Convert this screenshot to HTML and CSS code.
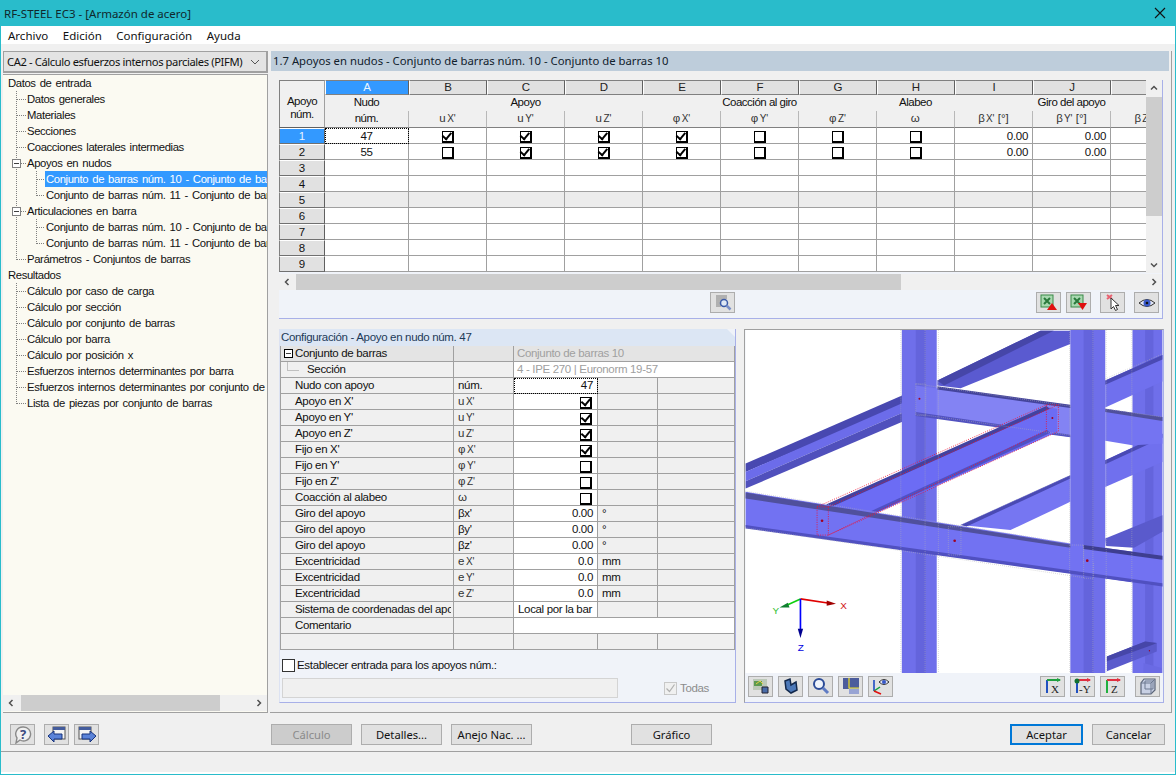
FILE: index.html
```html
<!DOCTYPE html>
<html lang="es">
<head>
<meta charset="utf-8">
<title>RF-STEEL EC3</title>
<link rel="stylesheet" href="styles.css">
</head>
<body>
<div class="app">
  <header class="titlebar">
    <span>RF-STEEL EC3 - [Armazón de acero]</span>
    <svg class="close" width="12" height="12" viewBox="0 0 12 12"><path d="M1 1l10 10M11 1L1 11" stroke="#111" stroke-width="1.1" fill="none"/></svg>
  </header>
  <nav class="menubar"><span>Archivo</span><span>Edición</span><span>Configuración</span><span>Ayuda</span></nav>

  <div class="content">
    <aside class="side">
      <div class="combo"><span>CA2 - Cálculo esfuerzos internos parciales (PIFM)</span>
        <svg width="10" height="6" viewBox="0 0 10 6"><path d="M1 1l4 4 4-4" stroke="#555" fill="none"/></svg>
      </div>
      <div class="tree">
        <div class="tree-rows">
          <div class="node l0">Datos de entrada</div>
          <div class="node l1"><i class="gut g1"></i>Datos generales</div>
          <div class="node l1"><i class="gut g1"></i>Materiales</div>
          <div class="node l1"><i class="gut g1"></i>Secciones</div>
          <div class="node l1"><i class="gut g1"></i>Coacciones laterales intermedias</div>
          <div class="node l1"><i class="gut g1"><b class="minus"></b></i>Apoyos en nudos</div>
          <div class="node l2"><i class="gut g2"></i><span class="label sel">Conjunto de barras núm. 10 - Conjunto de barras 10</span></div>
          <div class="node l2"><i class="gut g2 end"></i><span class="label">Conjunto de barras núm. 11 - Conjunto de barras 11</span></div>
          <div class="node l1"><i class="gut g1"><b class="minus"></b></i>Articulaciones en barra</div>
          <div class="node l2"><i class="gut g2"></i><span class="label">Conjunto de barras núm. 10 - Conjunto de barras 10</span></div>
          <div class="node l2"><i class="gut g2 end"></i><span class="label">Conjunto de barras núm. 11 - Conjunto de barras 11</span></div>
          <div class="node l1"><i class="gut g1 end"></i>Parámetros - Conjuntos de barras</div>
          <div class="node l0">Resultados</div>
          <div class="node l1"><i class="gut g1"></i>Cálculo por caso de carga</div>
          <div class="node l1"><i class="gut g1"></i>Cálculo por sección</div>
          <div class="node l1"><i class="gut g1"></i>Cálculo por conjunto de barras</div>
          <div class="node l1"><i class="gut g1"></i>Cálculo por barra</div>
          <div class="node l1"><i class="gut g1"></i>Cálculo por posición x</div>
          <div class="node l1"><i class="gut g1"></i>Esfuerzos internos determinantes por barra</div>
          <div class="node l1"><i class="gut g1"></i>Esfuerzos internos determinantes por conjunto de barras</div>
          <div class="node l1"><i class="gut g1 end"></i>Lista de piezas por conjunto de barras</div>
        </div>
        <div class="hscroll side-scroll">
          <svg class="arr" width="8" height="8" viewBox="0 0 8 8"><path d="M5.500 1L2.500 4l3 3" stroke="#505050" stroke-width="1.500" fill="none"/></svg>
          <div class="thumb side-thumb"></div><div class="track"></div>
          <svg class="arr" width="8" height="8" viewBox="0 0 8 8"><path d="M2.500 1l3 3-3 3" stroke="#505050" stroke-width="1.500" fill="none"/></svg>
        </div>
      </div>
    </aside>

    <main class="main">
      <h1 class="section-title">1.7 Apoyos en nudos - Conjunto de barras núm. 10 - Conjunto de barras 10</h1>

      <section class="grid-panel">
        <div class="grid-top">
          <div class="grid-clip">
            <table class="grid">
              <colgroup><col class="c-rh"><col class="c-a"><col class="c"><col class="c"><col class="c"><col class="c"><col class="c"><col class="c"><col class="c"><col class="c"><col class="c"><col class="c"></colgroup>
              <thead>
                <tr class="letters">
                  <th class="corner" rowspan="3"><span class="two">Apoyo<br>núm.</span></th>
                  <th class="letter active">A</th><th class="letter">B</th><th class="letter">C</th><th class="letter">D</th><th class="letter">E</th><th class="letter">F</th><th class="letter">G</th><th class="letter">H</th><th class="letter">I</th><th class="letter">J</th><th class="letter">K</th>
                </tr>
                <tr class="hd">
                  <th>Nudo</th><th colspan="3">Apoyo</th><th colspan="3">Coacción al giro</th><th>Alabeo</th><th colspan="3">Giro del apoyo</th>
                </tr>
                <tr class="hd sub">
                  <th>núm.</th>
                  <th class="sym">u<small>X'</small></th><th class="sym">u<small>Y'</small></th><th class="sym">u<small>Z'</small></th>
                  <th class="sym">φ<small>X'</small></th><th class="sym">φ<small>Y'</small></th><th class="sym">φ<small>Z'</small></th>
                  <th class="sym">ω</th>
                  <th class="sym deg">β<small>X'</small> [°]</th><th class="sym deg">β<small>Y'</small> [°]</th><th class="sym deg">β<small>Z'</small> [°]</th>
                </tr>
              </thead>
              <tbody>
                <tr>
                  <th class="rh active">1</th><td class="ctr focus">47</td>
                  <td class="ctr"><span class="cb on"></span></td><td class="ctr"><span class="cb on"></span></td><td class="ctr"><span class="cb on"></span></td>
                  <td class="ctr"><span class="cb on"></span></td><td class="ctr"><span class="cb"></span></td><td class="ctr"><span class="cb"></span></td>
                  <td class="ctr"><span class="cb"></span></td><td class="num">0.00</td><td class="num">0.00</td><td></td>
                </tr>
                <tr>
                  <th class="rh">2</th><td class="ctr">55</td>
                  <td class="ctr"><span class="cb"></span></td><td class="ctr"><span class="cb on"></span></td><td class="ctr"><span class="cb on"></span></td>
                  <td class="ctr"><span class="cb on"></span></td><td class="ctr"><span class="cb"></span></td><td class="ctr"><span class="cb"></span></td>
                  <td class="ctr"><span class="cb"></span></td><td class="num">0.00</td><td class="num">0.00</td><td></td>
                </tr>
                <tr><th class="rh">3</th><td></td><td></td><td></td><td></td><td></td><td></td><td></td><td></td><td></td><td></td><td></td></tr>
                <tr><th class="rh">4</th><td></td><td></td><td></td><td></td><td></td><td></td><td></td><td></td><td></td><td></td><td></td></tr>
                <tr class="shade"><th class="rh">5</th><td></td><td></td><td></td><td></td><td></td><td></td><td></td><td></td><td></td><td></td><td></td></tr>
                <tr><th class="rh">6</th><td></td><td></td><td></td><td></td><td></td><td></td><td></td><td></td><td></td><td></td><td></td></tr>
                <tr><th class="rh">7</th><td></td><td></td><td></td><td></td><td></td><td></td><td></td><td></td><td></td><td></td><td></td></tr>
                <tr><th class="rh">8</th><td></td><td></td><td></td><td></td><td></td><td></td><td></td><td></td><td></td><td></td><td></td></tr>
                <tr><th class="rh">9</th><td></td><td></td><td></td><td></td><td></td><td></td><td></td><td></td><td></td><td></td><td></td></tr>
              </tbody>
            </table>
          </div>
          <div class="vscroll">
            <svg class="arr" width="8" height="8" viewBox="0 0 8 8"><path d="M1 5.500L4 2.500l3 3" stroke="#505050" stroke-width="1.500" fill="none"/></svg>
            <div class="vthumb"></div><div class="track"></div>
            <svg class="arr" width="8" height="8" viewBox="0 0 8 8"><path d="M1 2.500L4 5.500l3-3" stroke="#505050" stroke-width="1.500" fill="none"/></svg>
          </div>
        </div>
        <div class="hscroll grid-scroll">
          <svg class="arr" width="8" height="8" viewBox="0 0 8 8"><path d="M5.500 1L2.500 4l3 3" stroke="#505050" stroke-width="1.500" fill="none"/></svg>
          <div class="thumb grid-thumb"></div><div class="track"></div>
          <svg class="arr" width="8" height="8" viewBox="0 0 8 8"><path d="M2.500 1l3 3-3 3" stroke="#505050" stroke-width="1.500" fill="none"/></svg>
        </div>
        <div class="toolbar grid-tools">
          <button class="tb tb-first" type="button"><svg width="20" height="18" viewBox="0 0 20 18"><path d="M3 2h11M3 4h11M3 6h8M3 8h4M3 10h4M3 12h5" stroke="#808080" fill="none"/><circle cx="11" cy="9" r="3.500" fill="#dfe8f5" stroke="#3a5aa8" stroke-width="1.500"/><path d="M13.500 11.500l4 4" stroke="#7a90c8" stroke-width="2.500"/></svg></button>
          <span class="fill"></span>
          <button class="tb" type="button"><svg width="20" height="18" viewBox="0 0 20 18"><rect x="2" y="1" width="12" height="12" fill="#a8d8b0" stroke="#3a8a48"/><path d="M5 4l6 6M11 4l-6 6" stroke="#2a7a3c" stroke-width="2"/><path d="M13 9l5 7H8z" fill="#e01010"/></svg></button>
          <button class="tb" type="button"><svg width="20" height="18" viewBox="0 0 20 18"><rect x="2" y="1" width="12" height="12" fill="#a8d8b0" stroke="#3a8a48"/><path d="M5 4l6 6M11 4l-6 6" stroke="#2a7a3c" stroke-width="2"/><path d="M9 9h9l-4.500 7z" fill="#e01010"/></svg></button>
          <button class="tb tb-wide" type="button"><svg width="20" height="18" viewBox="0 0 20 18"><path d="M4 1l5 4M9 1L4 5" stroke="#e86070" stroke-width="2"/><path d="M8 4v11l2.500-2.500 2 4 2-1-2-4H16z" fill="#fff" stroke="#333"/></svg></button>
          <button class="tb tb-wide" type="button"><svg width="20" height="18" viewBox="0 0 20 18"><path d="M2 9q8-7 16 0-8 7-16 0z" fill="#dfe4f4" stroke="#333"/><circle cx="10" cy="9" r="3.500" fill="#3858c8"/><circle cx="10" cy="9" r="1.300" fill="#111"/></svg></button>
        </div>
      </section>

      <div class="lower">
        <section class="config">
          <h2 class="config-title">Configuración - Apoyo en nudo núm. 47</h2>
          <table class="props">
            <colgroup><col class="p1"><col class="p2"><col class="p3"><col class="p4"><col class="p5"></colgroup>
            <tbody>
              <tr class="group"><td class="name first"><b class="minus black"></b>Conjunto de barras</td><td></td><td class="muted" colspan="3">Conjunto de barras 10</td></tr>
              <tr><td class="name sect"><i class="elbow"></i>Sección</td><td></td><td class="muted white" colspan="3">4 - IPE 270 | Euronorm 19-57</td></tr>
              <tr><td class="name">Nudo con apoyo</td><td class="unit">núm.</td><td class="val focus">47</td><td></td><td></td></tr>
              <tr><td class="name">Apoyo en X'</td><td class="unit sym">u<small>X'</small></td><td class="val"><span class="cb on"></span></td><td></td><td></td></tr>
              <tr><td class="name">Apoyo en Y'</td><td class="unit sym">u<small>Y'</small></td><td class="val"><span class="cb on"></span></td><td></td><td></td></tr>
              <tr><td class="name">Apoyo en Z'</td><td class="unit sym">u<small>Z'</small></td><td class="val"><span class="cb on"></span></td><td></td><td></td></tr>
              <tr><td class="name">Fijo en X'</td><td class="unit sym">φ<small>X'</small></td><td class="val"><span class="cb on"></span></td><td></td><td></td></tr>
              <tr><td class="name">Fijo en Y'</td><td class="unit sym">φ<small>Y'</small></td><td class="val"><span class="cb"></span></td><td></td><td></td></tr>
              <tr><td class="name">Fijo en Z'</td><td class="unit sym">φ<small>Z'</small></td><td class="val"><span class="cb"></span></td><td></td><td></td></tr>
              <tr><td class="name">Coacción al alabeo</td><td class="unit sym">ω</td><td class="val"><span class="cb"></span></td><td></td><td></td></tr>
              <tr><td class="name">Giro del apoyo</td><td class="unit">βx'</td><td class="val">0.00</td><td class="u2">°</td><td></td></tr>
              <tr><td class="name">Giro del apoyo</td><td class="unit">βy'</td><td class="val">0.00</td><td class="u2">°</td><td></td></tr>
              <tr><td class="name">Giro del apoyo</td><td class="unit">βz'</td><td class="val">0.00</td><td class="u2">°</td><td></td></tr>
              <tr><td class="name">Excentricidad</td><td class="unit sym">e<small>X'</small></td><td class="val">0.0</td><td class="u2">mm</td><td></td></tr>
              <tr><td class="name">Excentricidad</td><td class="unit sym">e<small>Y'</small></td><td class="val">0.0</td><td class="u2">mm</td><td></td></tr>
              <tr><td class="name">Excentricidad</td><td class="unit sym">e<small>Z'</small></td><td class="val">0.0</td><td class="u2">mm</td><td></td></tr>
              <tr><td class="name clip"><span>Sistema de coordenadas del apoyo</span></td><td></td><td class="val left">Local por la bar</td><td></td><td></td></tr>
              <tr><td class="name">Comentario</td><td></td><td class="white" colspan="3"></td></tr>
              <tr><td class="name"></td><td></td><td></td><td></td><td></td></tr>
            </tbody>
          </table>
          <div class="set-row"><span class="box"></span><span>Establecer entrada para los apoyos núm.:</span></div>
          <div class="input-row"><div class="input-off"></div><span class="todas"><span class="box off"><svg width="11" height="11" viewBox="0 0 11 11"><path d="M1.500 5.500l3 3 5-7" stroke="#b0b0b0" stroke-width="1.200" fill="none"/></svg></span>Todas</span></div>
        </section>

        <section class="view">
          <svg class="scene" width="418" height="344" viewBox="3 3 1254 1032">
            <rect x="3" y="3" width="1254" height="1032" fill="#fff"/>
            <!-- back beams -->
            <path d="M580 155L890 5h90v40L650 178l-70-8z" fill="#5a5ad0"/>
            <path d="M580 155L890 5h40L600 170z" fill="#4646a8"/>
            <path d="M3 405L515 182h30v18L3 430z" fill="#4848b0"/>
            <path d="M3 430L515 205v30L3 458z" fill="#6c6cea"/>
            <path d="M3 458L515 235h25v16L3 480z" fill="#5050bc"/>
            <path d="M650 590L980 440v80L800 605z" fill="#7676f2"/>
            <path d="M650 590L980 440v10L668 594z" fill="#4a4ab4"/>
            <!-- columns -->
            <rect x="473" y="3" width="105" height="1032" fill="#6f6fea"/>
            <rect x="515" y="3" width="30" height="1032" fill="#6464dc"/>
            <rect x="980" y="3" width="105" height="1032" fill="#6f6fea"/>
            <rect x="1020" y="3" width="30" height="1032" fill="#6464dc"/>
            <rect x="1167" y="3" width="90" height="1032" fill="#6f6fea"/>
            <rect x="1205" y="3" width="25" height="1032" fill="#6464dc"/>
            <!-- right side beams -->
            <path d="M1085 155L1257 78v80l-172 78z" fill="#7070ee"/>
            <path d="M1085 155L1257 78v14L1085 168z" fill="#4a4ab4"/>
            <path d="M1085 395L1257 315v85l-172 75z" fill="#7070ee"/>
            <path d="M1085 395L1257 315v12L1085 407z" fill="#4a4ab4"/>
            <path d="M1085 630L1257 560v50l-85 48-85-5z" fill="#5a5acc"/>
            <path d="M1090 985L1205 940l35 5v25l-150 60z" fill="#5a5acc"/>
            <path d="M1090 985L1205 940l35 5-12 5-138 50z" fill="#4646a8"/>
            <path d="M1200 1005l55 15v15h-55z" fill="#6a6ae4"/>
            <!-- upper cross beam -->
            <path d="M515 170L980 235v90L515 255z" fill="#7878f2" fill-opacity=".92"/>
            <path d="M580 172L980 228v10L580 182z" fill="#44449c"/>
            <path d="M1085 240L1257 265v80l-90 5-82-14z" fill="#7474f2"/>
            <path d="M1085 240L1257 265v12L1085 250z" fill="#50509c"/>
            <path d="M515 250L980 318v8L515 262z" fill="#5252c0"/>
            <!-- selected beam -->
            <path d="M250 530L910 235l30 5v70L405 550 380 560 250 545z" fill="#6c6cf4"/>
            <path d="M245 528L908 232l10 8L262 535z" fill="#4242a0"/>
            <path d="M400 550L920 312l-10-8L380 548z" fill="#5050c4"/>
            <!-- front beam -->
            <path d="M3 490L980 645l40 5 237 32v93L3 595z" fill="#7272f2"/>
            <path d="M3 492L980 648v10L3 510z" fill="#50509c"/>
            <path d="M1020 650L1257 682v12L1020 662z" fill="#3e3e90"/>
            <path d="M3 590L1257 765v10L3 600z" fill="#5050c0"/>
            <!-- dotted outlines -->
            <g fill="none" stroke="#b4b4b4" stroke-width="2" stroke-dasharray="2 4">
              <path d="M470 3v1032M543 3v1032M583 3v1032M978 3v1032M1048 3v1032M1088 3v1032M1165 3v1032"/>
              <path d="M515 165L980 232M515 255L980 320M3 488L980 645M3 598L1020 748M650 590L980 440M1085 150L1257 75M1085 240L1257 265"/>
              <path d="M515 165h30v95h-30zM613 595h38v85h-38zM980 650h40v55M1020 650v100h30v-50"/>
            </g>
            <g fill="none" stroke="#f01030" stroke-width="2.500" stroke-dasharray="3 4">
              <path d="M218 535L908 228h36v80L252 620h-34zM252 535v85M908 228v80M218 535h34M252 535L944 228M252 620L908 305"/>
            </g>
            <g fill="#a00020"><circle cx="233" cy="577" r="4"/><circle cx="926" cy="268" r="3"/><circle cx="632" cy="637" r="4"/><circle cx="1031" cy="697" r="4"/><circle cx="526" cy="210" r="3"/><circle cx="1218" cy="968" r="2"/></g>
            <!-- axes -->
            <path d="M168 812L255 825" stroke="#e00000" stroke-width="5"/>
            <path d="M247 817l28 10-28 6z" fill="#a00000"/>
            <path d="M168 812L125 832" stroke="#10d010" stroke-width="5"/>
            <path d="M130 824l-25 14 30 0z" fill="#108030"/>
            <path d="M168 812V905" stroke="#0000ff" stroke-width="5"/>
            <path d="M160 902h16l-8 28z" fill="#000090"/>
            <text x="288" y="842" class="ax" fill="#d01010">X</text>
            <text x="84" y="858" class="ax" fill="#30c030">Y</text>
            <text x="160" y="968" class="ax" fill="#0000e0">Z</text>
          </svg>
          <div class="toolbar view-tools">
            <button class="tb" type="button"><svg width="20" height="18" viewBox="0 0 20 18"><rect x="2" y="2" width="14" height="11" fill="#bcc8b8"/><path d="M3 4h8v5H3z" fill="#5c9a50"/><path d="M5 7l4-3 3 3" stroke="#e8d040" fill="none"/><path d="M11 10h6v6h-6z" fill="#4a6ca8" stroke="#223"/></svg></button>
            <button class="tb" type="button"><svg width="20" height="18" viewBox="0 0 20 18"><path d="M4 4l5-2 1 6 5-3 1 8-6 3-5-4z" fill="#4c78b8" stroke="#12284c" stroke-width="1.500"/></svg></button>
            <button class="tb" type="button"><svg width="20" height="18" viewBox="0 0 20 18"><circle cx="8" cy="7" r="5" fill="#eef3fb" stroke="#2c4c98" stroke-width="2"/><path d="M12 11l5 5" stroke="#5f7cc4" stroke-width="3"/></svg></button>
            <button class="tb" type="button"><svg width="20" height="18" viewBox="0 0 20 18"><rect x="2" y="1" width="16" height="11" fill="#4c5c9c"/><rect x="8" y="11" width="10" height="6" fill="#98a4d4"/><path d="M8 1v10h10" fill="none" stroke="#f0e020" stroke-width="1.200"/></svg></button>
            <button class="tb" type="button"><svg width="20" height="18" viewBox="0 0 20 18"><path d="M3 3v11" stroke="#1040c0" stroke-width="1.500"/><path d="M3 14l6-4" stroke="#10a040" stroke-width="1.500"/><path d="M3 14l7 3" stroke="#e01010" stroke-width="1.500"/><path d="M8 5q5-5 10 0-5 5-10 0z" fill="#dfe4f4" stroke="#333"/><circle cx="13" cy="5" r="2" fill="#3858c8"/></svg></button>
            <span class="fill"></span>
            <button class="tb" type="button"><svg width="20" height="18" viewBox="0 0 20 18"><path d="M4 3v13" stroke="#2050c0" stroke-width="2"/><path d="M4 3h13" stroke="#20a040" stroke-width="2"/><path d="M14 1l4 2-4 2z" fill="#20a040"/><text x="8" y="16" class="ic-t">X</text></svg></button>
            <button class="tb" type="button"><svg width="20" height="18" viewBox="0 0 20 18"><path d="M4 3v13" stroke="#2050c0" stroke-width="2"/><path d="M4 3h13" stroke="#e03040" stroke-width="2"/><circle cx="4" cy="4" r="2.500" fill="#107030"/><path d="M14 1l4 2-4 2z" fill="#e03040"/><text x="6" y="16" class="ic-t">-Y</text></svg></button>
            <button class="tb" type="button"><svg width="20" height="18" viewBox="0 0 20 18"><path d="M4 3v13" stroke="#20b040" stroke-width="2"/><path d="M4 3h13" stroke="#e03040" stroke-width="2"/><path d="M14 1l4 2-4 2z" fill="#e03040"/><text x="8" y="16" class="ic-t">Z</text></svg></button>
            <button class="tb tb-iso" type="button"><svg width="20" height="18" viewBox="0 0 20 18"><path d="M6 2h11v11l-4 4H3V6z" fill="#c8d0e4" stroke="#5a6478" stroke-width="1.200"/><path d="M3 6h10v11M13 6l4-4M7 4h8v8H7z" fill="none" stroke="#6c7890"/></svg></button>
          </div>
        </section>
      </div>
    </main>
  </div>

  <footer class="actions">
    <button class="tb help" type="button"><svg width="20" height="18" viewBox="0 0 20 18"><path d="M10 1a7 7 0 1 1-3 13l-4 3 1-5A7 7 0 0 1 10 1z" fill="#f0f0f0" stroke="#8a8a8a" stroke-width="1.400"/><text x="7" y="13" class="ic-q">?</text></svg></button>
    <button class="tb" type="button"><svg width="20" height="18" viewBox="0 0 20 18"><rect x="6" y="1" width="12" height="12" fill="#f4f4f4" stroke="#555"/><rect x="6" y="1" width="12" height="3" fill="#445c9c"/><path d="M1 10l6-5v3h8v5H7v3z" fill="#5a82d8" stroke="#16327c"/></svg></button>
    <button class="tb" type="button"><svg width="20" height="18" viewBox="0 0 20 18"><rect x="2" y="1" width="12" height="12" fill="#f4f4f4" stroke="#555"/><rect x="2" y="1" width="12" height="3" fill="#445c9c"/><path d="M19 10l-6-5v3H5v5h8v3z" fill="#5a82d8" stroke="#16327c"/></svg></button>
    <div class="mid-btns">
      <button class="btn disabled" type="button">Cálculo</button>
      <button class="btn" type="button">Detalles...</button>
      <button class="btn" type="button">Anejo Nac. ...</button>
    </div>
    <button class="btn graf" type="button">Gráfico</button>
    <button class="btn ok" type="button">Aceptar</button>
    <button class="btn cancel" type="button">Cancelar</button>
  </footer>
  <div class="status"></div>
</div>
</body>
</html>
```

FILE: styles.css
```css
* { box-sizing: border-box; }
html, body { margin: 0; padding: 0; }
body { font-family: "Liberation Sans", Arial, sans-serif; font-size: 11.500px; color: #111; background: #f0f0f0; overflow: hidden; }
button { font-family: "Noto Sans", sans-serif; font-size: 11.200px; color: #111; padding: 0; }

.app { width: 1176px; height: 775px; display: flex; flex-direction: column; background: #f0f0f0; border-left: 1px solid #29bccb; border-right: 1px solid #29bccb; border-bottom: 1px solid #29bccb; overflow: hidden; }
.titlebar { height: 26px; flex: none; background: #29bccb; display: flex; align-items: center; justify-content: space-between; padding: 0 9px 0 3px; font-family: "Noto Sans", sans-serif; font-size: 11.500px; color: #10282c; }
.menubar { height: 18px; flex: none; background: #fff; display: flex; gap: 14.500px; padding-left: 7px; align-items: center; font-family: "Noto Sans", sans-serif; font-size: 11.500px; }

.content { height: 669px; flex: none; display: flex; padding: 7px 0 0 2px; }
.side { width: 265px; flex: none; display: flex; flex-direction: column; }
.combo { height: 22px; flex: none; background: #e3e3e3; border: 1px solid #a0a0a0; border-width: 1px 2px 2px 1px; display: flex; align-items: center; justify-content: space-between; padding: 0 6px 0 3px; font-family: "Noto Sans", sans-serif; font-size: 11.200px; letter-spacing: -.39px; white-space: nowrap; }
.tree { margin-top: 1px; flex: 1; min-height: 0; display: flex; flex-direction: column; background: #fbfaf2; border-top: 1px solid #a0a0a0; border-right: 1px solid #a0a0a0; border-bottom: 1px solid #a0a0a0; font-size: 11.300px; letter-spacing: -.38px; word-spacing: 1.300px; }
.tree-rows { flex: 1; min-height: 0; overflow: hidden; }
.node { height: 16px; line-height: 16px; display: flex; white-space: nowrap; overflow: hidden; }
.l0 { padding-left: 5px; }
.gut { width: 24px; height: 16px; flex: none; display: block; font-style: normal; }
.g1 {
  background:
    repeating-linear-gradient(#808080 0 1px, transparent 1px 2px) 13px 0 / 1px 16px no-repeat,
    repeating-linear-gradient(to right, #808080 0 1px, transparent 1px 2px) 14px 8px / 9px 1px no-repeat;
}
.g1.end {
  background:
    repeating-linear-gradient(#808080 0 1px, transparent 1px 2px) 13px 0 / 1px 9px no-repeat,
    repeating-linear-gradient(to right, #808080 0 1px, transparent 1px 2px) 14px 8px / 9px 1px no-repeat;
}
.g2 {
  width: 42px;
  background:
    repeating-linear-gradient(#808080 0 1px, transparent 1px 2px) 13px 0 / 1px 16px no-repeat,
    repeating-linear-gradient(#808080 0 1px, transparent 1px 2px) 33px 0 / 1px 16px no-repeat,
    repeating-linear-gradient(to right, #808080 0 1px, transparent 1px 2px) 34px 8px / 8px 1px no-repeat;
}
.g2.end {
  background:
    repeating-linear-gradient(#808080 0 1px, transparent 1px 2px) 13px 0 / 1px 16px no-repeat,
    repeating-linear-gradient(#808080 0 1px, transparent 1px 2px) 33px 0 / 1px 9px no-repeat,
    repeating-linear-gradient(to right, #808080 0 1px, transparent 1px 2px) 34px 8px / 8px 1px no-repeat;
}
.minus { display: block; width: 9px; height: 9px; margin: 4px 0 0 9px; border: 1px solid #808080; background: linear-gradient(#404040, #404040) center / 5px 1px no-repeat #fff; }
.label { flex: 1; min-width: 0; overflow: hidden; padding-left: 1px; }
.sel { background: #3399ff; color: #fff; }

.hscroll { height: 16px; flex: none; background: #f0f0f0; display: flex; align-items: stretch; }
.arr { flex: none; align-self: center; margin: 0 4px; }
.thumb { background: #cdcdcd; }
.track { flex: 1; }
.side-scroll { margin-bottom: 1px; }
.side-thumb { width: 199px; margin-left: 2px; }

.main { width: 902px; flex: none; margin-left: 2px; height: 662px; display: flex; flex-direction: column; border-right: 1px solid #a0a0a0; border-bottom: 1px solid #a0a0a0; padding-right: 2px; }
.section-title { margin: 0 0 0 1px; height: 20px; flex: none; background: #becddb; font-family: "Noto Sans", sans-serif; font-size: 11.300px; font-weight: 400; line-height: 20px; padding-left: 2px; color: #10202c; white-space: nowrap; }

.grid-panel { margin: 9px 6px 0 9px; height: 239px; flex: none; display: flex; flex-direction: column; background: #f0f3f9; border-right: 1px solid #a8b0e8; border-bottom: 1px solid #a8b0e8; }
.grid-top { height: 193px; flex: none; display: flex; }
.grid-clip { width: 867px; flex: none; overflow: hidden; }
.grid { table-layout: fixed; width: 910px; border-collapse: separate; border-spacing: 0; background: #fff; letter-spacing: -.5px; }
.c-rh { width: 46px; } .c-a { width: 84px; } .c { width: 78px; }
.grid th, .grid td { padding: 0; height: 16px; line-height: 14px; font-weight: 400; border-right: 1px solid #a0a0a0; border-bottom: 1px solid #a0a0a0; overflow: hidden; white-space: nowrap; }
.grid td { letter-spacing: -.3px; }
.grid .letters th { height: 15px; line-height: 13px; }
.grid th.corner { background: #f0f0f0; border-left: 1px solid #808080; border-top: 1px solid #808080; border-bottom-color: #606060; padding-top: 14px; vertical-align: top; }
.two { display: block; line-height: 13px; }
.grid th.letter { background: #e1e1e1; color: #222; border-top: 1px solid #808080; border-right: 1px solid #606060; border-bottom: 1px solid #808080; border-left: 1px solid #fff; letter-spacing: 0; }
.grid th.letter.active { background: #3399ff; color: #e8f4ff; }
.grid .hd th { background: #f0f0f0; vertical-align: top; border-right: 1px solid #f0f0f0; border-bottom: 0; }
.grid .hd.sub th { height: 17px; border-right: 1px solid #b8b8b8; border-bottom: 1px solid #808080; }
.sym { color: #333; letter-spacing: .5px; }
.grid .sym { letter-spacing: .5px; }
.sym small { font-size: 10px; letter-spacing: 0; margin-left: 1px; line-height: 1; }
.grid .deg { letter-spacing: 0; }
.grid th.rh { background: #e1e1e1; border-top: 1px solid #fff; border-left: 1px solid #808080; border-right: 1px solid #606060; border-bottom: 1px solid #707070; line-height: 13px; letter-spacing: 0; }
.grid th.rh.active { background: #3399ff; color: #e8f4ff; }
.grid tbody td { vertical-align: middle; }
.ctr { text-align: center; }
.grid .num { text-align: right; padding-right: 4px; }
.focus { outline: 1px dotted #000; outline-offset: -1px; }
.shade td { background: #ececec; }
.cb { display: inline-flex; width: 12px; height: 12px; background: #fff; border: 1px solid #000; border-right-width: 2px; border-bottom-width: 2px; vertical-align: top; align-items: center; justify-content: center; margin-top: 3px; }
.grid .cb { margin-top: 2px; }
.val .cb { margin-right: 1px; }
.cb.on::after { content: ""; display: block; width: 4px; height: 7px; border: solid #000; border-width: 0 2px 2px 0; transform: rotate(40deg) translate(-1px, -1px); }

.vscroll { width: 16px; flex: none; margin-left: 0; background: #f0f0f0; display: flex; flex-direction: column; align-items: stretch; }
.vscroll .arr { margin: 4px 4px; }
.vthumb { height: 119px; margin-top: 1px; background: #cdcdcd; }
.grid-scroll { margin-top: 1px; height: 16px; }
.grid-thumb { width: 605px; margin-left: 1px; }

.toolbar { display: flex; align-items: center; }
.fill { flex: 1; }
.grid-tools { height: 28px; padding: 0 3px 3px 0; gap: 5px; }
.tb { width: 25px; height: 21px; flex: none; background: #e1e1e1; border: 1px solid #adadad; display: flex; align-items: center; justify-content: center; }
.tb-first { margin-left: 431px; }
.tb-wide { margin-left: 4px; }

.lower { margin: 10px 0 0 9px; height: 374px; flex: none; display: flex; gap: 8px; }
.config { width: 457px; flex: none; display: flex; flex-direction: column; background: #f0f3f9; border-right: 1px solid #a8b0e8; border-bottom: 1px solid #a8b0e8; border-left: 1px solid #dce2f2; letter-spacing: -.33px; }
.config-title { margin: 0; height: 17px; flex: none; background: #dce6f4; font-size: 11.500px; font-weight: 400; line-height: 16px; padding-left: 1px; color: #1c3a58; clip-path: polygon(0 0, calc(100% - 8px) 0, 100% 8px, 100% 100%, 0 100%); }
.props { table-layout: fixed; width: 455px; border-collapse: separate; border-spacing: 0; background: #f0f0f0; }
.p1 { width: 174px; } .p2 { width: 60px; } .p3 { width: 84px; } .p4 { width: 60px; } .p5 { width: 77px; }
.props td { height: 16px; line-height: 14px; padding: 0; vertical-align: top; border-right: 1px solid #a0a0a0; border-bottom: 1px solid #a0a0a0; white-space: nowrap; overflow: hidden; }
.props td:first-child { border-left: 1px solid #a0a0a0; }
.props .group td { background: #e4e4e4; }
.props .name { padding-left: 14px; }
.props .name.first { padding-left: 2px; }
.minus.black { display: inline-block; width: 9px; height: 9px; margin: 0 2px 0 1px; border-color: #000; background-color: #fff; vertical-align: -1px; }
.props .sect { padding-left: 6px; }
.elbow { display: inline-block; width: 20px; height: 9px; vertical-align: top; background: linear-gradient(#c0c0c0, #c0c0c0) 0 0 / 1px 8px no-repeat, linear-gradient(#c0c0c0, #c0c0c0) 0 8px / 12px 1px no-repeat; }
.props .unit { padding-left: 4px; }
.props .val { background: #fff; text-align: right; padding-right: 4px; }
.props .val.left { text-align: left; padding-left: 4px; padding-right: 0; }
.props .u2 { padding-left: 4px; }
.props .muted { color: #a0a0a0; padding-left: 3px; }
.props .white { background: #fff; }
.clip span { display: block; overflow: hidden; width: 156px; }
.set-row { display: flex; align-items: center; gap: 2px; margin: 7px 0 0 2px; height: 16px; flex: none; }
.box { width: 13px; height: 13px; border: 1px solid #333; background: #fff; flex: none; display: inline-flex; align-items: center; justify-content: center; }
.input-row { display: flex; align-items: center; margin: 5px 0 0 2px; }
.input-off { width: 336px; height: 20px; background: #f0f0f0; border: 1px solid #d4d4d4; }
.todas { display: flex; gap: 3px; align-items: center; margin-left: 46px; color: #8c8c8c; }
.box.off { border-color: #c8c8c8; background: #f0f0f0; }

.view { width: 420px; flex: none; display: flex; flex-direction: column; background: #f0f3f9; border-right: 1px solid #a8b0e8; border-bottom: 1px solid #a8b0e8; border-top: 1px solid #a0a0a0; border-left: 1px solid #a0a0a0; }
.scene { display: block; flex: none; width: 418px; height: 343px; }
.ax { font-size: 30px; }
.view-tools { flex: 1; gap: 5px; padding: 0 3px 3px 3px; }
.tb-iso { margin-left: 5px; }
.ic-t { font-family: "Liberation Serif", serif; font-size: 11px; fill: #222; }
.ic-q { font-size: 13px; font-weight: 700; fill: #3a4a80; }

.actions { height: 39px; flex: none; display: flex; align-items: flex-start; padding: 11px 0 0 9px; border-bottom: 1px solid #a0a0a0; gap: 9px; }
.actions .tb { margin-right: -4px; }
.actions .tb.help { margin-right: 0; }
.mid-btns { display: flex; gap: 9px; margin-left: 167px; }
.btn { width: 81px; height: 21px; background: #e1e1e1; border: 1px solid #adadad; flex: none; line-height: 17px; }
.btn.disabled { background: #cccccc; color: #8a8a8a; }
.graf { margin-left: 90px; }
.ok { width: 73px; margin-left: 289px; border: 2px solid #0078d7; }
.cancel { width: 73px; }
.status { flex: 1; background: #f0f0f0; border-bottom: 2px solid #fff; }
```
